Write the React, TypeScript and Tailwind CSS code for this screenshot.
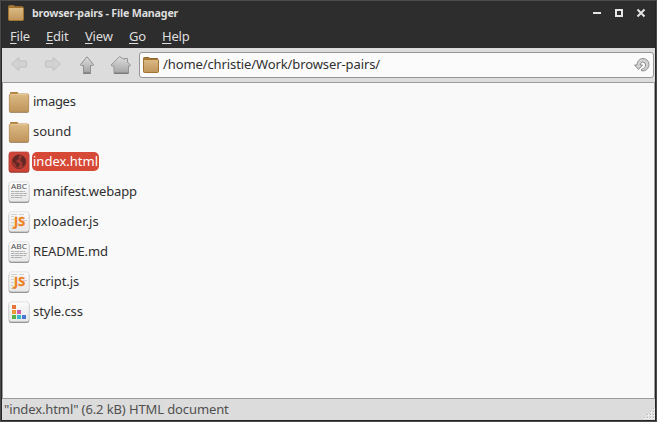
import React from 'react';

function Folder({ className = '' }: { className?: string }) {
  return (
    <svg viewBox="0 0 22 22" className={className}>
      <defs>
        <linearGradient id="tan" x1="0" y1="0" x2="0" y2="1">
          <stop offset="0" stopColor="#dcba85" />
          <stop offset="1" stopColor="#bf955b" />
        </linearGradient>
      </defs>
      <path d="M2 4V2q0-1 1-1h6q1 0 1 1v2z" fill="#ad7f3b" />
      <rect x="1" y="3" width="20" height="19" rx="2" fill="#8c7355" opacity=".8" />
      <rect x="1.300" y="2.800" width="19.400" height="18" rx="1.500" fill="url(#tan)" stroke="#b98e50" strokeWidth=".6" />
      <path d="M2.500 3.600h17" stroke="#e8cda2" strokeWidth=".8" />
    </svg>
  );
}

function SmallFolder() {
  return (
    <svg viewBox="0 0 18 18" className="h-[18px] w-[18px] shrink-0">
      <path d="M1.500 4V2.500q0-1 1-1h4.500l1 1h7.500l.5 2z" fill="#a87c39" stroke="#8f662b" />
      <rect x="1.500" y="3.500" width="15" height="13" rx="1" fill="url(#tan)" stroke="#a1732f" />
    </svg>
  );
}

function FileIcon({ kind }: { kind: string }) {
  if (kind === 'folder') return <Folder className="h-[22px] w-[22px] shrink-0" />;
  const html = kind === 'html';
  return (
    <svg viewBox="0 0 22 22" className="h-[22px] w-[22px] shrink-0">
      <defs>
        <linearGradient id="page" x1="0" y1="0" x2="0" y2="1">
          <stop offset="0" stopColor="#fbfbfb" />
          <stop offset="1" stopColor="#e7e7e7" />
        </linearGradient>
      </defs>
      <rect x=".8" y="2" width="20.400" height="19.800" rx="2.300" fill={html ? '#8d3b34' : '#666'} />
      <rect x="1" y=".9" width="20" height="19.900" rx="2.200" fill={html ? '#cd4335' : 'url(#page)'} stroke={html ? '#b43e34' : '#d2d2d2'} strokeWidth=".6" />
      {html && (
        <g>
          <circle cx="11" cy="10.800" r="7.200" fill="#a63a32" />
          <circle cx="11" cy="10.800" r="6.800" fill="none" stroke="#7b2f2a" strokeWidth=".9" />
          <path d="M4.500 8.500q1.500-3.500 5-4.500l2.500.5-1.500 1.800.8 1.500-2.300 1.400-1 1.600 2.500.8 1.800 1.700-1.800 2.200-1 2-1.300-2.500-1.200-2.500-2-1.500zM12.500 7.500l2-2.700 2.300 2.300.9 3-.7 3.500-2 2.400-.9-2.600.2-1.900-2-1.300z" fill="#642825" />
        </g>
      )}
      {kind === 'text' && (
        <g>
          <text x="3" y="8.200" fontFamily="Noto Sans, sans-serif" fontSize="7.500" fill="#4d4d4d" textLength="16" lengthAdjust="spacingAndGlyphs">ABC</text>
          <path d="M3 10.500h14M3 12.500h16M3 14.500h15M3 16.500h11" stroke="#aaa" strokeWidth=".9" strokeDasharray="3 .5 5 .4" />
        </g>
      )}
      {kind === 'js' && (
        <g>
          <path d="M3 3.500h6M11 3.500h5M3 5.500h3M3 8.500h3M3 11.500h3M3 14.500h2M3 17.500h5M15 9.500h4" stroke="#c4c4c4" strokeWidth=".8" />
          <text x="6" y="14.500" fontFamily="Noto Sans, sans-serif" fontSize="12.500" fontWeight="700" fill="#ed801d" stroke="#ed801d" strokeWidth=".4" textLength="11" lengthAdjust="spacingAndGlyphs">JS</text>
        </g>
      )}
      {kind === 'css' && (
        <g>
          <path fill="#e8733d" d="M4 4h4v4H4z" />
          <path fill="#e99a35" d="M4 9h4v4H4z" />
          <path fill="#cf5eaa" d="M9 9h4v4H9z" />
          <path fill="#54b44b" d="M4 14h4v4H4z" />
          <path fill="#38b7cb" d="M9 14h4v4H9z" />
          <path fill="#4b74d7" d="M14 14h4v4h-4z" />
        </g>
      )}
    </svg>
  );
}

const files = [
  ['images', 'folder', 'tracking-[-0.3px]'],
  ['sound', 'folder', 'tracking-normal'],
  ['index.html', 'html', 'tracking-normal'],
  ['manifest.webapp', 'text', 'tracking-[-0.13px]'],
  ['pxloader.js', 'js', 'tracking-[0.1px]'],
  ['README.md', 'text', 'tracking-[-0.1px]'],
  ['script.js', 'js', 'tracking-[-0.1px]'],
  ['style.css', 'css', 'tracking-[-0.05px]'],
];

const menus = [
  ['F', 'ile', 'w-9'],
  ['E', 'dit', 'w-[39px]'],
  ['V', 'iew', 'w-11'],
  ['G', 'o', 'w-[33px]'],
  ['H', 'elp', 'w-9'],
];

function Toolbar() {
  return (
    <div className="flex h-[34px] shrink-0 items-center bg-[#dcdcdc] pl-[7px] pr-px">
      <svg viewBox="0 0 130 30" className="h-[30px] w-[130px] shrink-0">
        <defs>
          <linearGradient id="metal" x1="0" y1="0" x2="0" y2="1">
            <stop offset="0" stopColor="#dedede" />
            <stop offset="1" stopColor="#a5a5a5" />
          </linearGradient>
        </defs>
        <g fill="#d2d2d2" stroke="#c0c0c0" strokeLinejoin="round">
          <path d="M2.500 14l7.500-6.500v3.500h7.500v6H10v3.500z" />
          <path d="M51.500 14l-7.500-6.500v3.500h-7.500v6H44v3.500z" />
        </g>
        <path d="M78 6.800l-6.500 7.700q0 1 1 1h2v7h7v-7h2q1 0 1-1z" fill="url(#metal)" stroke="#909090" strokeLinejoin="round" />
        <path d="M110.500 6.700l-8.300 8.300q0 1 1 1h1.800v7h14.500v-7h1.500q.8-.5 0-1.300l-2.500-2.700V8.500h-3v1z" fill="url(#metal)" stroke="#959595" strokeLinejoin="round" />
        <path d="M105 23.300h14.500M74 23.300h8" stroke="#6d6d6d" />
      </svg>
      <div className="flex h-[26px] min-w-0 grow items-center rounded-[3px] border border-[#969696] bg-[#fbfbfb] pl-[2px] pr-[3px]">
        <SmallFolder />
        <span className="mb-[2px] ml-[3px] grow whitespace-nowrap text-[13px] leading-[18px] tracking-[-0.1px]">/home/christie/Work/browser-pairs/</span>
        <svg viewBox="0 0 16 16" className="mb-px h-4 w-4 shrink-0">
          <path d="M.5 8H3C3 4.500 5.500 1.500 9 1.500a6 6 0 0 1 6 6c0 3-2 5.500-4.800 6.300H7.500v-1.500c2.500-.3 4-2 4-4.300A2.800 2.800 0 0 0 9 5C7.300 5 6.300 6.300 6.300 8h2.200l-4 4.500z" fill="#d2d2d2" stroke="#858585" strokeWidth=".9" strokeLinejoin="round" />
        </svg>
      </div>
    </div>
  );
}

export default function App() {
  return (
    <main className="h-[422px] w-[657px] border border-[#4b4b4b] font-['Noto_Sans','Open_Sans',sans-serif] text-[#303030]">
      <div className="flex h-full flex-col border-x border-b border-[#262626] bg-[#f9f9f9]">
        <header className="h-[47px] shrink-0 bg-[#2d2d2d] text-[#dedede]">
          <div className="flex h-6 items-center pl-[5px] pr-[9px]">
            <SmallFolder />
            <h1 className="mb-px ml-[7px] grow text-[10.700px] font-bold leading-5 tracking-[-0.19px]">browser-pairs - File Manager</h1>
            <svg viewBox="0 0 54 12" className="h-3 w-[54px]" fill="none" stroke="#e4e4e4" strokeWidth="2">
              <path d="M1 6h8" />
              <path d="M24 3h6v6h-6z" />
              <path d="M45.500 2.500l7 7m0-7l-7 7" />
            </svg>
          </div>
          <nav className="flex h-[23px] items-center pb-px pl-2 text-[13px] leading-5 tracking-[-0.2px]">
            {menus.map(([key, rest, width]) => (
              <span key={key} className={width}><u className="underline-offset-2">{key}</u>{rest}</span>
            ))}
          </nav>
        </header>
        <Toolbar />
        <section className="grow border border-[#9d9d9d] bg-[#f9f9f9] pl-[5px] pt-1">
          {files.map(([name, kind, tracking]) => (
            <div key={name} className="flex h-[30px] items-center">
              <FileIcon kind={kind} />
              <span className={'mb-px ml-[2px] rounded-[5px] px-px text-[13px] leading-[19px] ' + tracking + (kind === 'html' ? ' bg-[#d64937] text-white' : '')}>{name}</span>
            </div>
          ))}
        </section>
        <footer className="flex h-[21px] shrink-0 items-center justify-between bg-[#dcdcdc] pl-[2px] text-[13px] leading-5 tracking-[-0.11px] text-[#505050]">
          <span className="mb-px">"index.html" (6.2 kB) HTML document</span>
          <svg viewBox="0 0 12 12" className="mb-px h-3 w-3 self-end">
            <path fill="#f4f4f4" d="M10 1h2v2h-2zM7 4h2v2H7zM10 4h2v2h-2zM4 7h2v2H4zM7 7h2v2H7zM10 7h2v2h-2zM1 10h2v2H1zM4 10h2v2H4zM7 10h2v2H7zM10 10h2v2h-2z" />
            <path fill="#b0b0b0" d="M10 1h1v1h-1zM7 4h1v1H7zM10 4h1v1h-1zM4 7h1v1H4zM7 7h1v1H7zM10 7h1v1h-1zM1 10h1v1H1zM4 10h1v1H4zM7 10h1v1H7zM10 10h1v1h-1z" />
          </svg>
        </footer>
      </div>
    </main>
  );
}
